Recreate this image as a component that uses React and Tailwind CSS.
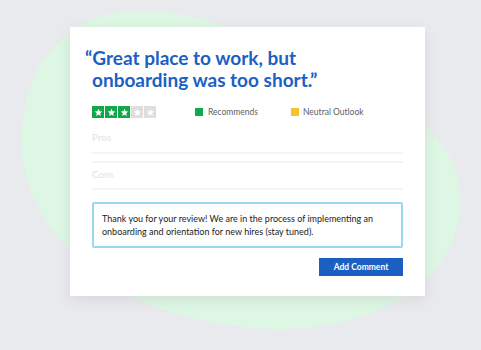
import React from 'react';

const Star = ({ on }) => (
  <div className={`w-[12px] h-[12px] flex items-center justify-center ${on ? 'bg-[#12a84a]' : 'bg-[#dedede]'}`}>
    <svg viewBox="0 0 24 24" className="w-[9px] h-[9px]" fill="#ffffff">
      <path d="M12 2l2.9 6.9 7.1.6-5.4 4.7 1.6 7.1L12 17.6 5.8 21.3l1.6-7.1L2 9.5l7.1-.6z" />
    </svg>
  </div>
);

const App = () => {
  return (
    <div className="relative w-[481px] h-[350px] bg-[#e9eaee] overflow-hidden font-['Lato',sans-serif]">
      {/* background blob */}
      <svg className="absolute inset-0" width="481" height="350" viewBox="0 0 481 350">
        <path
          d="M130 11 C190 8 240 30 330 70 C420 105 465 150 460 210 C455 285 370 332 270 329 C170 325 100 290 52 230 C12 175 14 110 42 62 C68 25 100 13 130 11 Z"
          fill="#def6e4"
        />
      </svg>

      <div className="relative ml-[70px] mt-[27px] w-[355px] h-[269px] bg-white shadow-[0_4px_14px_rgba(0,0,0,0.08)] px-[22px] pt-[20px]">
        {/* Title */}
        <h1 className="text-[19px] leading-[22px] font-bold text-[#1b60c4]">
          <span className="-ml-[7px]">“</span>Great place to work, but
          <br />
          onboarding was too short.”
        </h1>

        {/* Rating row */}
        <div className="flex items-center mt-[15px] h-[12px]">
          <div className="flex gap-[1px]">
            <Star on />
            <Star on />
            <Star on />
            <Star />
            <Star />
          </div>
          <div className="flex items-center ml-[39px]">
            <div className="w-[8px] h-[8px] bg-[#12a84a]" />
            <span className="ml-[5px] text-[8.5px] text-[#5b5f66]">Recommends</span>
          </div>
          <div className="flex items-center ml-[33px]">
            <div className="w-[8px] h-[8px] bg-[#f6c22e]" />
            <span className="ml-[4px] text-[8.5px] text-[#5b5f66]">Neutral Outlook</span>
          </div>
        </div>

        {/* Pros / Cons */}
        <div className="mt-[13px] text-[10px] leading-[12px] text-[#e2e2e4]">Pros</div>
        <div className="mt-[9px] h-[2px] bg-[#f4f4f5]" />
        <div className="mt-[7px] h-[2px] bg-[#f4f4f5]" />
        <div className="mt-[5px] text-[10px] leading-[12px] text-[#e2e2e4]">Cons</div>
        <div className="mt-[8px] h-[2px] bg-[#f4f4f5]" />

        {/* Reply box */}
        <div className="mt-[12px] h-[46px] border-2 border-[#9dd6f5] rounded-[2px] px-[8px] pt-[8px] text-[9px] leading-[13px] text-[#222222]">
          Thank you for your review! We are in the process of implementing an onboarding and orientation for new hires (stay tuned).
        </div>

        <div className="flex justify-end mt-[10px]">
          <button className="w-[84px] h-[18px] bg-[#1b5fc2] text-white text-[8.5px] font-bold flex items-center justify-center">
            Add Comment
          </button>
        </div>
      </div>
    </div>
  );
};

export default App;
